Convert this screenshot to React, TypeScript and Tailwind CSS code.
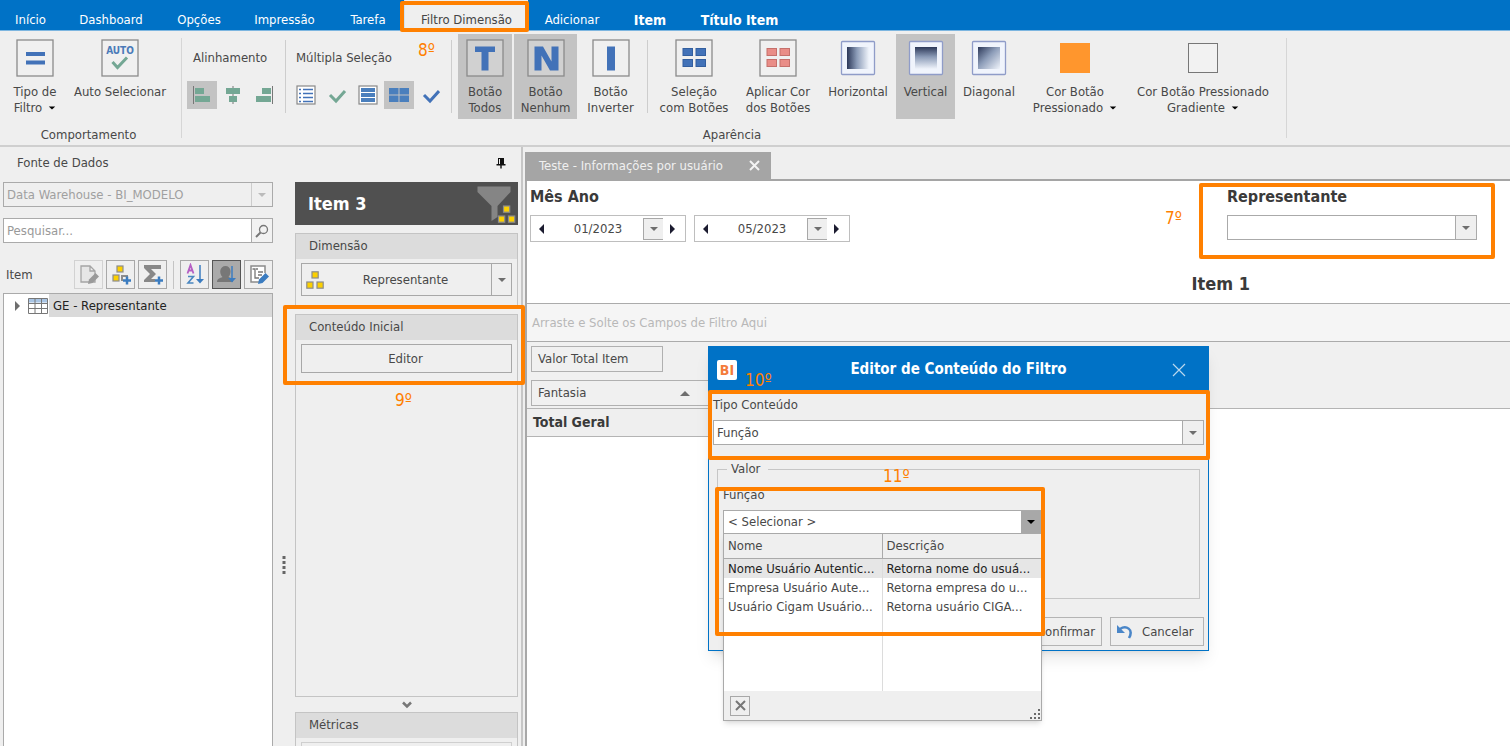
import type { ReactNode } from "react";

const Tri = ({
  dir = "down",
  size = 10,
  className = "text-[#6e6e6e]",
}: {
  dir?: "down" | "up" | "left" | "right";
  size?: number;
  className?: string;
}) => {
  const points = {
    down: "1,3 9,3 5,7",
    up: "0,8 10,8 5,3",
    left: "7,0 7,10 2,5",
    right: "3,0 3,10 8,5",
  }[dir];
  return (
    <svg width={size} height={size} viewBox="0 0 10 10" className={`shrink-0 ${className}`} aria-hidden="true">
      <polygon points={points} fill="currentColor" />
    </svg>
  );
};

const Framed = ({ children }: { children?: ReactNode }) => (
  <svg width="38" height="38" viewBox="0 0 38 38" aria-hidden="true">
    <rect x="1" y="1" width="36" height="36" fill="#f2f2f2" fillOpacity="0.3" stroke="#8a8a8a" strokeWidth="1.3" />
    {children}
  </svg>
);

const Quad = ({ fill, stroke }: { fill: string; stroke: string }) => (
  <Framed>
    {[
      [8, 9.5],
      [21, 9.5],
      [8, 20.5],
      [21, 20.5],
    ].map(([x, y]) => (
      <rect key={`${x}-${y}`} x={x} y={y} width="9.5" height="7" fill={fill} stroke={stroke} />
    ))}
  </Framed>
);

const GradientIcon = ({ id, x2, y2 }: { id: string; x2: string; y2: string }) => (
  <svg width="38" height="38" viewBox="0 0 38 38" aria-hidden="true">
    <defs>
      <linearGradient id={id} x1="0" y1="0" x2={x2} y2={y2}>
        <stop offset="0" stopColor="#2c3858" />
        <stop offset="0.45" stopColor="#8c9cb8" />
        <stop offset="1" stopColor="#f0f4fb" />
      </linearGradient>
    </defs>
    <rect x="2.5" y="2.5" width="33" height="33" rx="1" fill="#f0f4fc" stroke="#8f9cc8" strokeWidth="1.3" />
    <rect x="8" y="8" width="22" height="22" fill={`url(#${id})`} />
  </svg>
);

const Blocks = () => (
  <svg width="18" height="18" viewBox="0 0 18 18" aria-hidden="true">
    <g fill="#fcd000" stroke="#8c8c8c" strokeWidth="1.2">
      <rect x="6" y="0.800" width="6.200" height="6.200" />
      <rect x="0.800" y="11" width="6.200" height="6.200" />
      <rect x="11" y="11" width="6.200" height="6.200" />
    </g>
  </svg>
);

const tabs = [
  { label: "Início", width: "w-[61px]" },
  { label: "Dashboard", width: "w-[100px]" },
  { label: "Opções", width: "w-[76px]" },
  { label: "Impressão", width: "w-[95px]" },
  { label: "Tarefa", width: "w-[72px]" },
  { label: "Filtro Dimensão", width: "w-[124px]", active: true },
  { label: "Adicionar", width: "w-[88px]" },
  { label: "Item", width: "w-[68px]", bold: true },
  { label: "Título Item", width: "w-[111px]", bold: true },
];

function TabBar() {
  return (
    <nav className="flex h-[31px] shrink-0 border-b border-[#7db6e0] bg-[#0072c6] text-white">
      {tabs.map((t) => (
        <button
          key={t.label}
          className={`${t.width} shrink-0 whitespace-nowrap pt-[9px] ${t.bold ? "text-sm font-bold" : ""} ${
            t.active ? "border-l border-[#cfe3f3] bg-[#efefef] text-[#444]" : ""
          }`}
        >
          {t.label}
        </button>
      ))}
    </nav>
  );
}

function RibbonButton({
  icon,
  lines,
  width,
  pressed,
  menu,
}: {
  icon: ReactNode;
  lines: string[];
  width: string;
  pressed?: boolean;
  menu?: boolean;
}) {
  return (
    <button
      aria-pressed={pressed}
      className={`${width} flex h-[85px] shrink-0 flex-col items-center gap-[7px] whitespace-nowrap pt-[5px] leading-4 ${
        pressed ? "bg-[#c3c3c3]" : ""
      }`}
    >
      {icon}
      <span className="flex flex-col items-center">
        {lines.map((l, i) => (
          <span key={l} className="flex items-center gap-[6px]">
            {l}
            {menu && i === lines.length - 1 && <Tri size={8} className="text-black" />}
          </span>
        ))}
      </span>
    </button>
  );
}

const SmallTool = ({ label, pressed, children }: { label: string; pressed?: boolean; children: ReactNode }) => (
  <button
    aria-label={label}
    aria-pressed={pressed}
    className={`flex h-7 w-[30px] items-center justify-center ${pressed ? "bg-[#c3c3c3]" : ""}`}
  >
    <svg width="20" height="20" viewBox="0 0 20 20" aria-hidden="true">
      {children}
    </svg>
  </button>
);

const Divider = () => <span className="mt-[6px] h-[73px] w-px shrink-0 bg-[#cdcdcd]" />;

function Ribbon() {
  return (
    <div className="flex h-[116px] shrink-0 overflow-hidden border-b-2 border-[#cfcfcf] pt-[3px]">
      <section className="flex w-[181px] shrink-0 flex-col items-center">
        <div className="flex w-full pl-1">
          <RibbonButton
            width="w-[62px]"
            lines={["Tipo de", "Filtro"]}
            menu
            icon={
              <Framed>
                <path d="M10 13h19v4H10zM10 21.500h19v4H10z" fill="#4272b8" />
              </Framed>
            }
          />
          <RibbonButton
            width="w-[108px]"
            lines={["Auto Selecionar"]}
            icon={
              <Framed>
                <text x="19" y="15" textAnchor="middle" className="fill-[#4a7ab8] text-[10px] font-bold">
                  AUTO
                </text>
                <path d="M11.500 23l5 5.500 9.500-10" fill="none" stroke="#74a794" strokeWidth="3" />
              </Framed>
            }
          />
        </div>
        <p className="mt-2 pr-1 leading-4">Comportamento</p>
      </section>
      <span className="mt-1 h-[100px] w-px shrink-0 bg-[#d6d6d6]" />
      <section className="flex shrink-0 flex-col items-center">
        <div className="flex h-[85px]">
          <div className="w-[103px] pl-[5px] pt-4">
            <p className="pl-[6px] leading-4">Alinhamento</p>
            <div className="flex gap-px pt-[15px]">
              <SmallTool label="Alinhar à esquerda" pressed>
                <path d="M1.500 1v18" stroke="#777" />
                <path d="M3 3h9v6H3zM3 11h15v6H3z" fill="#74a794" />
              </SmallTool>
              <SmallTool label="Centralizar">
                <path d="M10 1v18" stroke="#777" />
                <path d="M3 3h14v6H3zM6 11h8v6H6z" fill="#74a794" />
              </SmallTool>
              <SmallTool label="Alinhar à direita">
                <path d="M18.500 1v18" stroke="#777" />
                <path d="M8 3h9v6H8zM2 11h15v6H2z" fill="#74a794" />
              </SmallTool>
            </div>
          </div>
          <Divider />
          <div className="w-[165px] pl-[5px] pt-4">
            <p className="pl-[5px] leading-4">Múltipla Seleção</p>
            <div className="flex gap-px pt-[15px]">
              <SmallTool label="Lista">
                <rect x="1" y="1" width="18" height="18" fill="#fff" stroke="#888" strokeWidth="1.2" />
                <path d="M3 4.500h2m2 0h10M3 8.500h2m2 0h10M3 12.500h2m2 0h10M3 16.500h2m2 0h10" stroke="#4272b8" strokeWidth="1.500" />
              </SmallTool>
              <SmallTool label="Marcar lista">
                <path d="M3 10l6 6 9-10" fill="none" stroke="#74a794" strokeWidth="3" />
              </SmallTool>
              <SmallTool label="Botões em lista">
                <rect x="1" y="1" width="18" height="18" fill="#fff" stroke="#888" strokeWidth="1.2" />
                <path d="M3 3h14v4H3zM3 8h14v4H3zM3 13h14v4H3z" fill="#4a7fbd" />
              </SmallTool>
              <SmallTool label="Botões em grade" pressed>
                <path d="M0 3h9.500v6.500H0zM10.500 3H20v6.500h-9.500zM0 10.500h9.500V17H0zM10.500 10.500H20V17h-9.500z" fill="#4a7fbd" />
              </SmallTool>
              <SmallTool label="Marcar botões">
                <path d="M4 10l6 6 9-10" fill="none" stroke="#4272b8" strokeWidth="3" />
              </SmallTool>
            </div>
          </div>
          <Divider />
          <div className="flex gap-0.5 pl-[6px] pr-[5px]">
            <RibbonButton
              pressed
              width="w-[54px]"
              lines={["Botão", "Todos"]}
              icon={
                <Framed>
                  <path d="M9 7.500h20v5.500h-6.500v18.500h-7V13H9z" fill="#4272b8" />
                </Framed>
              }
            />
            <RibbonButton
              pressed
              width="w-[63px]"
              lines={["Botão", "Nenhum"]}
              icon={
                <Framed>
                  <path d="M7.500 7.500h8.500l8.500 15v-15h7v24h-8.500l-8.500-15v15h-7z" fill="#4272b8" />
                </Framed>
              }
            />
            <RibbonButton
              width="w-[63px]"
              lines={["Botão", "Inverter"]}
              icon={
                <Framed>
                  <path d="M15 7.500h8v24h-8z" fill="#4272b8" />
                </Framed>
              }
            />
          </div>
          <Divider />
          <div className="flex pl-[4px] pr-[7px]">
            <RibbonButton width="w-[84px]" lines={["Seleção", "com Botões"]} icon={<Quad fill="#4272b8" stroke="#335f9f" />} />
            <RibbonButton width="w-[84px]" lines={["Aplicar Cor", "dos Botões"]} icon={<Quad fill="#e98d87" stroke="#c5706b" />} />
            <RibbonButton width="w-[76px]" lines={["Horizontal"]} icon={<GradientIcon id="gradH" x2="1" y2="0" />} />
            <RibbonButton width="w-[59px]" pressed lines={["Vertical"]} icon={<GradientIcon id="gradV" x2="0" y2="1" />} />
            <RibbonButton width="w-[68px]" lines={["Diagonal"]} icon={<GradientIcon id="gradD" x2="1" y2="1" />} />
            <RibbonButton
              width="w-[104px]"
              menu
              lines={["Cor Botão", "Pressionado"]}
              icon={
                <svg width="38" height="38" viewBox="0 0 38 38" aria-hidden="true">
                  <rect x="4" y="4" width="30" height="30" fill="#ff962d" />
                </svg>
              }
            />
            <RibbonButton
              width="w-[152px]"
              menu
              lines={["Cor Botão Pressionado", "Gradiente"]}
              icon={
                <svg width="38" height="38" viewBox="0 0 38 38" aria-hidden="true">
                  <rect x="4.500" y="4.500" width="29" height="29" fill="#f2f2f2" stroke="#777" />
                </svg>
              }
            />
          </div>
        </div>
        <p className="mt-2 pr-1 leading-4">Aparência</p>
      </section>
      <span className="mt-1 h-[100px] w-px shrink-0 bg-[#d6d6d6]" />
    </div>
  );
}

function Combo({
  label,
  options,
  disabled,
  id,
}: {
  label: string;
  options: string[];
  disabled?: boolean;
  id?: string;
}) {
  return (
    <div className={`grid h-[25px] grid-cols-[1fr_21px] border border-[#aaa] ${disabled ? "text-[#a0a0a0]" : "bg-white"}`}>
      <select
        id={id}
        aria-label={id ? undefined : label}
        disabled={disabled}
        className="col-span-full row-start-1 h-full w-full appearance-none bg-transparent pl-[3px] opacity-100 outline-none"
      >
        {options.map((o) => (
          <option key={o}>{o}</option>
        ))}
      </select>
      <span
        className={`pointer-events-none col-start-2 row-start-1 flex items-center justify-center border-l bg-[#efefef] ${
          disabled ? "border-[#ccc]" : "border-[#aaa]"
        }`}
      >
        <Tri className={disabled ? "text-[#bbb]" : "text-[#6e6e6e]"} />
      </span>
    </div>
  );
}

const ItemTool = ({ label, state, children }: { label: string; state?: "disabled" | "pressed"; children: ReactNode }) => (
  <button
    aria-label={label}
    disabled={state === "disabled"}
    className={`flex h-[29px] w-[29px] shrink-0 items-center justify-center border ${
      state === "disabled" ? "border-[#d2d2d2]" : state === "pressed" ? "border-[#555] bg-[#aaa]" : "border-[#a8a8a8]"
    }`}
  >
    <svg width="23" height="23" viewBox="0 0 23 23" aria-hidden="true">
      {children}
    </svg>
  </button>
);

const Pencil = ({ fill }: { fill: string }) => <path d="M11 21l1-4.500 6.500-6.500 3.500 3.500-6.500 6.500z" fill={fill} />;

const Plus = () => <path d="M18 13.500v8M14 17.500h8" stroke="#3b7cc0" strokeWidth="2.500" />;

function SourcePanel() {
  return (
    <section className="flex w-[270px] shrink-0 flex-col">
      <Combo label="Fonte de Dados" options={["Data Warehouse - BI_MODELO"]} disabled />
      <div className="mt-[11px] flex h-[25px] border border-[#aaa] bg-white">
        <input aria-label="Pesquisar" placeholder="Pesquisar..." className="min-w-0 flex-1 pl-[3px] outline-none placeholder:text-[#999]" />
        <button aria-label="Buscar" className="flex w-[21px] items-center justify-center border-l border-[#aaa] bg-[#f2f2f2]">
          <svg width="14" height="14" viewBox="0 0 14 14" aria-hidden="true" fill="none" stroke="#777">
            <circle cx="8.500" cy="5.500" r="4" strokeWidth="1.300" />
            <path d="M5.500 8.500L1 13" strokeWidth="2" />
          </svg>
        </button>
      </div>
      <div className="mt-[17px] flex items-center gap-[3px]">
        <span className="flex-1 pl-[3px]">Item</span>
        <ItemTool label="Editar" state="disabled">
          <path d="M4 3h9l5 5v11H4zM13 3v5h5" fill="#e6e6e6" stroke="#a5a5a5" strokeWidth="1.300" />
          <Pencil fill="#9a9a9a" />
        </ItemTool>
        <ItemTool label="Adicionar dimensão">
          <g fill="#fcd000" stroke="#8c8c8c" strokeWidth="1.2">
            <rect x="8" y="3" width="6" height="6" />
            <rect x="4" y="12" width="6" height="6" />
            <path d="M13 18v-5h6" fill="none" strokeWidth="2" />
          </g>
          <Plus />
        </ItemTool>
        <ItemTool label="Adicionar métrica">
          <path d="M3 2h17v4H10l5 5-5 5h4v3H3v-2l6-6-6-6z" fill="#888" />
          <Plus />
        </ItemTool>
        <span className="mx-[3px] h-7 w-px bg-[#c4c4c4]" />
        <ItemTool label="Ordenar">
          <path d="M4.500 10.500L7.500 2l3 8.500M5.500 7.500h4" fill="none" stroke="#b45fc4" strokeWidth="1.800" />
          <path d="M5 13.500h5.500l-5.500 6.500h5.500" fill="none" stroke="#4a86c0" strokeWidth="1.600" />
          <path d="M17 2v16" stroke="#3b7cc0" strokeWidth="1.500" />
          <path d="M13 16h8l-4 4.500z" fill="#3b7cc0" />
        </ItemTool>
        <ItemTool label="Ordenar por usuário" state="pressed">
          <path d="M2 19c0-3 3-4 5.500-5-4-4-2.500-11 3-11s6.500 7 3 11l4.500 2v3z" fill="#777" />
          <path d="M17 3v14" stroke="#3b7cc0" strokeWidth="1.500" />
          <path d="M13 15h8l-4 4.500z" fill="#3b7cc0" />
        </ItemTool>
        <ItemTool label="Propriedades">
          <path d="M18 10V3H4v16h8" fill="#fff" stroke="#8c8c8c" strokeWidth="1.500" />
          <path d="M5.500 6H8v9h4M9 6h2M11 9h5M11 12h4" fill="none" stroke="#777" strokeWidth="1.300" />
          <Pencil fill="#3b7cc0" />
        </ItemTool>
      </div>
      <ul className="mt-1 flex-1 border border-b-0 border-[#aaa] bg-white">
        <li className="flex h-[23px] items-center text-[#222]">
          <Tri dir="right" className="ml-2 text-[#6e6e6e]" />
          <svg width="20" height="16" viewBox="0 0 20 16" className="ml-[6px] mr-[1px] shrink-0" aria-hidden="true">
            <path d="M.5.5h19v4H.5z" fill="#a9c5e4" />
            <path d="M.5.5h19v15H.5zM.5 5.500h19M.5 10.500h19M7 .5v15M13.500.5v15" fill="none" stroke="#777" />
          </svg>
          <button className="flex-1 self-stretch bg-[#dadada] pl-1 text-left">GE - Representante</button>
        </li>
      </ul>
    </section>
  );
}

const Group = ({ title, className, children }: { title: string; className: string; children?: ReactNode }) => (
  <section className={`border border-[#c4c4c4] ${className}`}>
    <h3 className="h-[25px] bg-[#dcdcdc] pl-[13px] leading-6">{title}</h3>
    {children}
  </section>
);

function ItemPanel() {
  return (
    <section className="flex min-w-0 flex-1 flex-col">
      <header className="flex h-[43px] shrink-0 items-center justify-between bg-[#505050] pl-[13px] pr-[2px]">
        <h2 className="text-lg font-bold text-white">Item 3</h2>
        <svg width="40" height="40" viewBox="0 0 40 40" aria-hidden="true">
          <path d="M1.500 2.500h33V8L21.500 22v11l-6 4V22L1.500 8z" fill="#858585" />
          <g fill="#fcd000" stroke="#8c8c8c" strokeWidth="1.2">
            <rect x="27.500" y="22" width="6.200" height="6.200" />
            <rect x="22.500" y="32" width="6.200" height="6.200" />
            <rect x="32.500" y="32" width="6.200" height="6.200" />
          </g>
        </svg>
      </header>
      <Group title="Dimensão" className="mt-2 h-[73px] shrink-0">
        <div className="mx-[5px] mt-1 flex h-[33px] border border-[#a8a8a8]">
          <button className="flex flex-1 items-center pl-1">
            <Blocks />
            <span className="flex-1 pr-1">Representante</span>
          </button>
          <button aria-label="Escolher dimensão" className="flex w-5 items-center justify-center border-l border-[#a8a8a8]">
            <Tri />
          </button>
        </div>
      </Group>
      <Group title="Conteúdo Inicial" className="mt-2 flex-1">
        <div className="mx-[5px] mt-1 flex">
          <button className="h-[29px] flex-1 border border-[#a8a8a8] pr-0.5">Editor</button>
        </div>
      </Group>
      <button aria-label="Mostrar mais" className="flex h-[15px] items-center justify-center">
        <svg width="10" height="8" viewBox="0 0 10 8" aria-hidden="true">
          <path d="M1 1.500l4 4 4-4" fill="none" stroke="#777" strokeWidth="2.500" />
        </svg>
      </button>
      <Group title="Métricas" className="h-[34px] overflow-hidden border-b-0">
        <div className="mx-[5px] mt-1 h-7 border border-[#cfcfcf]" />
      </Group>
    </section>
  );
}

const Period = ({ value }: { value: string }) => (
  <div className="flex h-[27px] w-[156px] items-center border border-[#bebebe] bg-white">
    <button aria-label="Anterior" className="flex w-[22px] justify-center">
      <Tri dir="left" className="text-[#1c1c30]" />
    </button>
    <input aria-label="Período" defaultValue={value} className="min-w-0 flex-1 text-center outline-none" />
    <button aria-label="Abrir calendário" className="flex h-[22px] w-5 items-center justify-center border border-r-0 border-[#a8a8a8] bg-[#efefef]">
      <Tri />
    </button>
    <button aria-label="Próximo" className="flex w-[22px] pl-1">
      <Tri dir="right" className="text-[#1c1c30]" />
    </button>
  </div>
);

function Document() {
  return (
    <main className="flex min-w-0 flex-1 flex-col pl-[2px] pt-[5px]">
      <div className="flex h-[29px] shrink-0 items-stretch border-b-2 border-[#a5a5a5]">
        <div className="flex w-[246px] items-center bg-[#a5a5a5] pl-[14px] text-[#f0f0f0]">
          <span className="w-[210px] whitespace-nowrap">Teste - Informações por usuário</span>
          <button aria-label="Fechar aba">
            <svg width="11" height="11" viewBox="0 0 11 11" aria-hidden="true">
              <path d="M1 1l9 9M10 1l-9 9" stroke="#f4f4f4" strokeWidth="2" />
            </svg>
          </button>
        </div>
      </div>
      <div className="flex flex-1 flex-col border-l-2 border-[#a8a8a8] bg-white">
        <div className="flex h-[86px] shrink-0 justify-between pt-[6px]">
          <div className="pl-[3px]">
            <h3 className="text-[16px] font-bold leading-5 text-[#3a3a3a]">Mês Ano</h3>
            <div className="mt-2 flex gap-2">
              <Period value="01/2023" />
              <Period value="05/2023" />
            </div>
          </div>
          <div className="w-[283px]">
            <label htmlFor="rep" className="block text-[16px] font-bold leading-5 text-[#3a3a3a]">
              Representante
            </label>
            <div className="mt-2 w-[250px]">
              <Combo id="rep" label="Representante" options={[""]} />
            </div>
          </div>
        </div>
        <h2 className="self-end pr-[260px] pt-[5px] text-lg font-bold leading-6 text-[#3a3a3a]">Item 1</h2>
        <div className="mt-[7px] flex h-[39px] shrink-0 items-center border-y border-[#ababab] bg-[#f5f5f5] pl-[5px] text-[#b8b8b8]">
          Arraste e Solte os Campos de Filtro Aqui
        </div>
        <div className="flex h-[67px] shrink-0 flex-col gap-[8px] border-b border-[#b4b4b4] bg-[#f0f0f0] pl-1 pt-1">
          <button className="h-[26px] w-[132px] border border-[#b0b0b0] pl-[6px] text-left">Valor Total Item</button>
          <button className="flex h-[26px] w-[180px] items-center justify-between border border-[#b0b0b0] pl-[6px] pr-5">
            Fantasia <Tri dir="up" />
          </button>
        </div>
        <div className="h-[28px] w-[190px] border-b border-[#b4b4b4] bg-[#efefef] pl-[6px] text-sm font-bold leading-[26px] text-[#3a3a3a]">Total Geral</div>
      </div>
    </main>
  );
}

const functionRows = [
  ["Nome Usuário Autentic...", "Retorna nome do usuá..."],
  ["Empresa Usuário Aute...", "Retorna empresa do u..."],
  ["Usuário Cigam Usuário...", "Retorna usuário CIGA..."],
];

function FunctionPopup() {
  return (
    <div className="absolute left-[14px] top-[187px] z-10 flex h-[187px] w-[319px] flex-col border border-t-0 border-[#aaa] bg-white shadow-md">
      <table className="w-full table-fixed border-separate border-spacing-0 text-left leading-[18px]">
        <thead>
          <tr className="h-[25px] bg-[#efefef]">
            <th className="border-b border-r border-[#aaa] pl-1 font-normal">Nome</th>
            <th className="border-b border-[#aaa] pl-1 font-normal">Descrição</th>
          </tr>
        </thead>
        <tbody>
          {functionRows.map(([name, text], i) => (
            <tr key={name} className={`h-[19px] whitespace-nowrap ${i === 0 ? "bg-[#e6e6e6] text-[#222]" : ""}`}>
              <td className="border-r border-[#dcdcdc] p-0 pl-1">{name}</td>
              <td className="p-0 pl-1">{text}</td>
            </tr>
          ))}
          <tr className="h-[75px]">
            <td className="border-r border-[#dcdcdc]" />
            <td />
          </tr>
        </tbody>
      </table>
      <div className="flex flex-1 items-center justify-between bg-[#efefef] pl-[6px]">
        <button aria-label="Limpar" className="flex h-5 w-5 items-center justify-center border border-[#a8a8a8]">
          <svg width="11" height="11" viewBox="0 0 11 11" aria-hidden="true">
            <path d="M1 1l9 9M10 1l-9 9" stroke="#777" strokeWidth="2" />
          </svg>
        </button>
        <svg width="12" height="12" viewBox="0 0 12 12" className="self-end" aria-hidden="true">
          <path d="M9 1h2v2H9zM5 5h2v2H5zM9 5h2v2H9zM1 9h2v2H1zM5 9h2v2H5zM9 9h2v2H9z" fill="#6a6a6a" />
        </svg>
      </div>
    </div>
  );
}

function FilterDialog() {
  return (
    <div
      role="dialog"
      aria-label="Editor de Conteúdo do Filtro"
      className="absolute left-[708px] top-[346px] flex h-[305px] w-[501px] flex-col border border-[#0072c6] bg-[#efefef] shadow-lg"
    >
      <header className="flex h-[45px] shrink-0 items-center bg-[#0072c6] pl-2 pr-[22px]">
        <svg width="20" height="20" viewBox="0 0 20 20" aria-hidden="true">
          <rect width="20" height="20" rx="2" fill="#fff" />
          <text x="10" y="15" textAnchor="middle" className="fill-[#f47c3c] text-[14px] font-bold">
            BI
          </text>
        </svg>
        <h2 className="flex-1 pl-2 text-center text-[15px] font-bold text-white">Editor de Conteúdo do Filtro</h2>
        <button aria-label="Fechar">
          <svg width="14" height="14" viewBox="0 0 14 14" aria-hidden="true">
            <path d="M1 1l12 12M13 1L1 13" stroke="#b9d7ee" strokeWidth="1.200" />
          </svg>
        </button>
      </header>
      <div className="px-1 pt-[5px]">
        <label htmlFor="tipo" className="block leading-4">
          Tipo Conteúdo
        </label>
        <div className="mt-[7px]">
          <Combo id="tipo" label="Tipo Conteúdo" options={["Função"]} />
        </div>
      </div>
      <fieldset className="mx-2 mt-4 h-[138px] border border-[#c6c6c6] pl-[5px]">
        <legend className="ml-1 px-1 pr-2 leading-4">Valor</legend>
        <label htmlFor="func" className="mt-[10px] block leading-4">
          Função
        </label>
        <div className="mt-[7px] grid h-[24px] w-[319px] grid-cols-[1fr_20px] border border-[#aaa] bg-white">
          <select id="func" className="col-span-full row-start-1 h-full w-full appearance-none bg-transparent pl-1 outline-none">
            <option>&lt; Selecionar &gt;</option>
          </select>
          <span className="pointer-events-none col-start-2 row-start-1 flex items-center justify-center bg-[#a8a8a8]">
            <Tri className="text-black" />
          </span>
        </div>
      </fieldset>
      <footer className="mt-[18px] flex justify-end gap-2 px-1">
        <button className="h-[29px] w-[94px] border border-[#b4b4b4] pr-[6px] text-right">Confirmar</button>
        <button className="flex h-[29px] w-[94px] items-center border border-[#b4b4b4] pl-[5px]">
          <svg width="18" height="16" viewBox="0 0 18 16" aria-hidden="true">
            <path d="M4 5c6-4 14 0 9 9" fill="none" stroke="#4a86c8" strokeWidth="2.500" />
            <path d="M1 1v8h8z" fill="#4a86c8" />
          </svg>
          <span className="pl-2">Cancelar</span>
        </button>
      </footer>
      <FunctionPopup />
    </div>
  );
}

const steps = [
  { text: "7º", spot: "left-[1165px] top-[206px]", box: "left-[1199px] top-[183px] h-[76px] w-[296px]" },
  { text: "8º", spot: "left-[418px] top-[38px]", box: "left-[400px] top-[1px] h-[31px] w-[129px]" },
  { text: "9º", spot: "left-[395px] top-[388px]", box: "left-[283px] top-[305px] h-[80px] w-[242px]" },
  { text: "10º", spot: "left-[745px] top-[368px]", box: "left-[708px] top-[390px] h-[70px] w-[502px]" },
  { text: "11º", spot: "left-[883px] top-[464px]", box: "left-[715px] top-[487px] h-[149px] w-[330px]" },
];

export default function App() {
  return (
    <div className="relative flex h-screen flex-col overflow-hidden bg-[#efefef] font-['DejaVu_Sans_Condensed','DejaVu_Sans',sans-serif] text-[13px] text-[#484848]">
      <TabBar />
      <Ribbon />
      <div className="flex min-h-0 flex-1">
        <aside className="flex w-[523px] shrink-0 flex-col border-r-2 border-[#c6c6c6] pl-[3px] pr-[3px]">
          <header className="flex h-[35px] shrink-0 items-center justify-between pb-1 pl-[14px] pr-3">
            <h2>Fonte de Dados</h2>
            <button aria-label="Fixar painel">
              <svg width="10" height="12" viewBox="0 0 10 12" aria-hidden="true">
                <path d="M2 1h6v6h1.500v1.500H.5V7H2zM4.300 8h1.400v3.500H4.300z" fill="#111" />
                <path d="M3.500 2v5" stroke="#efefef" />
              </svg>
            </button>
          </header>
          <div className="flex min-h-0 flex-1">
            <SourcePanel />
            <div className="flex w-[22px] shrink-0 items-center justify-center">
              <svg width="4" height="18" viewBox="0 0 4 18" aria-hidden="true" className="mt-[202px]">
                <path d="M.5 0h3v3h-3zM.5 5h3v3h-3zM.5 10h3v3h-3zM.5 15h3v3h-3z" fill="#666" />
              </svg>
            </div>
            <ItemPanel />
          </div>
        </aside>
        <Document />
      </div>
      <FilterDialog />
      {steps.map((s) => (
        <div key={s.text}>
          <span className={`pointer-events-none absolute z-20 border-4 border-[#ff8000] ${s.box} rounded-[2px]`} />
          <span className={`absolute z-20 ${s.spot} text-[17px] font-light leading-6 text-[#ff8000]`}>{s.text}</span>
        </div>
      ))}
    </div>
  );
}
